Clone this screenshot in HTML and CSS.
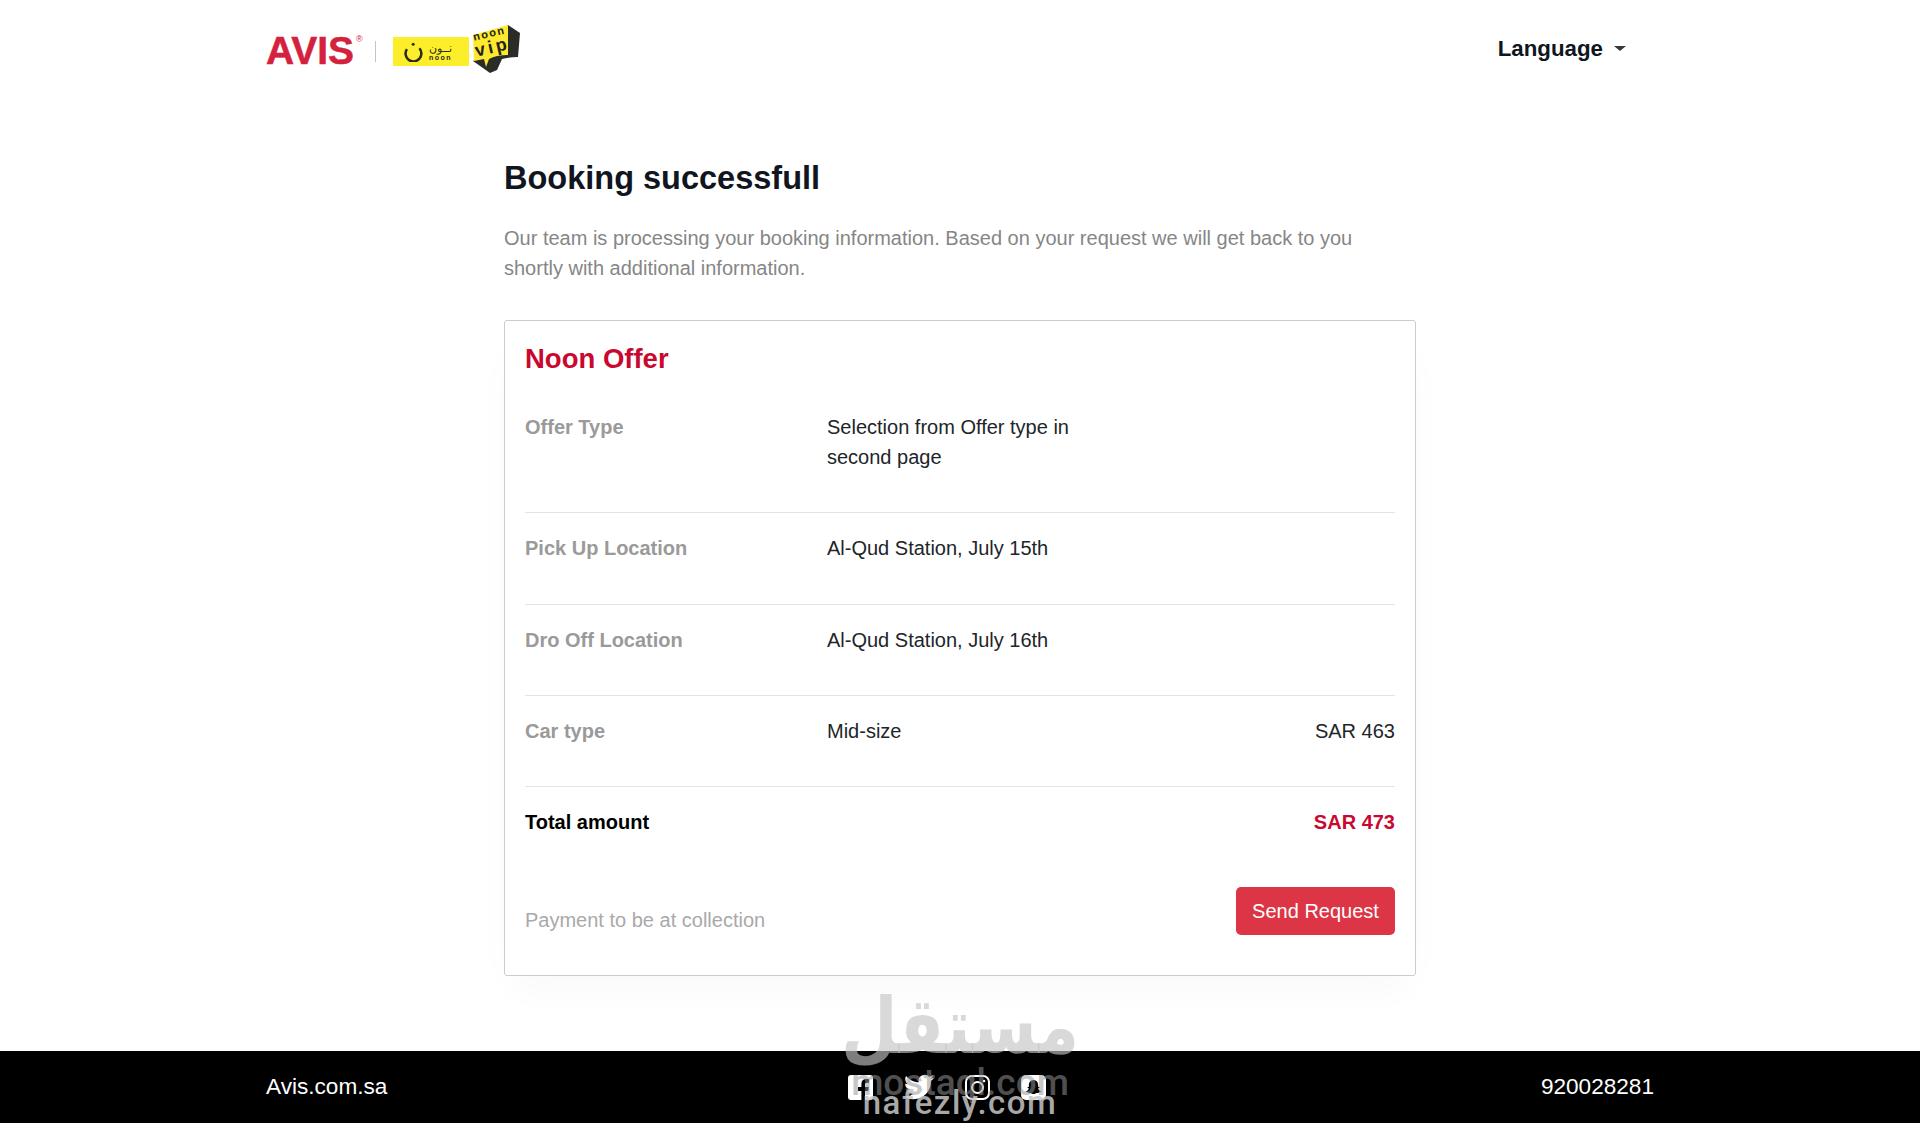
FILE: index.html
```html
<!DOCTYPE html>
<html lang="en">
<head>
  <meta charset="UTF-8" />
  <title>Booking successfull</title>
  <link rel="stylesheet" href="styles.css">
</head>
<body>
  <!-- Header with logos and language switch -->
  <header class="top-bar">
    <div class="brand">
      <span class="avis-logo">AVIS<sup>®</sup></span>
      <span class="brand-sep"></span>
      <span class="noon-logo">
        <svg class="noon-mark" viewBox="0 0 24 24" width="20" height="20" aria-hidden="true">
          <path d="M18.500 7.500A9.500 9.500 0 1 1 3.500 8.500" fill="none" stroke="#2a2a18" stroke-width="3"/>
          <circle cx="11" cy="2.600" r="1.800" fill="#2a2a18"/>
        </svg>
        <span class="noon-words"><span dir="rtl">نــون</span><span class="noon-latin">noon</span></span>
      </span>
      <span class="vip-badge">
        <svg viewBox="0 0 48 52" width="48" height="52" aria-hidden="true">
          <path d="M36 1 L48 9 L46 33 Q36 33 30 35 L25 46 L18 49 L1 37 L10 30 Z" fill="#2b2b28"/>
          <path d="M1 11 L36 1 L36 31 Q24 31 17 35 L14 43 L12 35 L2 37 Z" fill="#fde92f"/>
        </svg>
        <span class="vip-text"><span>noon</span><b>vip</b></span>
      </span>
    </div>
    <a class="lang-toggle" href="#">Language<span class="caret"></span></a>
  </header>

  <!-- Booking confirmation -->
  <main class="booking">
    <h1>Booking successfull</h1>
    <p class="intro">Our team is processing your booking information. Based on your request we will get back to you shortly with additional information.</p>

    <section class="offer-card">
      <h2>Noon Offer</h2>
      <div class="offer-row">
        <div class="offer-label">Offer Type</div>
        <div class="offer-value">Selection from Offer type in second page</div>
      </div>
      <div class="offer-row">
        <div class="offer-label">Pick Up Location</div>
        <div class="offer-value">Al-Qud Station, July 15th</div>
      </div>
      <div class="offer-row">
        <div class="offer-label">Dro Off Location</div>
        <div class="offer-value">Al-Qud Station, July 16th</div>
      </div>
      <div class="offer-row">
        <div class="offer-label">Car type</div>
        <div class="offer-value">Mid-size</div>
        <div class="offer-price">SAR 463</div>
      </div>
      <div class="total-row">
        <div>Total amount</div>
        <div class="total-price">SAR 473</div>
      </div>
      <div class="card-actions">
        <span class="pay-note">Payment to be at collection</span>
        <a class="btn-send" href="#">Send Request</a>
      </div>
    </section>
  </main>

  <footer class="site-footer">
    <a href="#">Avis.com.sa</a>
    <div class="socials">
      <svg viewBox="0 0 25 25" width="25" height="25" aria-hidden="true">
        <path fill="#fff" d="M3 0h19a3 3 0 0 1 3 3v19a3 3 0 0 1-3 3h-5v-9h3.200l.5-4H17V9.600c0-1.200.4-1.900 2-1.900h2V4.200c-.4-.1-1.500-.2-2.800-.2-2.900 0-4.800 1.700-4.800 4.900V12H10v4h3.400v9H3a3 3 0 0 1-3-3V3a3 3 0 0 1 3-3z"/>
      </svg>
      <svg viewBox="0 0 24 24" width="30" height="30" aria-hidden="true">
        <path fill="#fff" d="M23.950 4.570a10 10 0 0 1-2.820.770 4.960 4.960 0 0 0 2.160-2.720 9.900 9.900 0 0 1-3.120 1.180 4.920 4.920 0 0 0-8.380 4.480C7.690 8.090 4.070 6.120 1.640 3.160a4.820 4.820 0 0 0-.66 2.470c0 1.710.87 3.210 2.190 4.100a4.900 4.900 0 0 1-2.230-.62v.060a4.920 4.920 0 0 0 3.950 4.830 5 5 0 0 1-2.210.08 4.940 4.940 0 0 0 4.600 3.420A9.870 9.870 0 0 1 0 19.540a14 14 0 0 0 7.560 2.210c9.050 0 14-7.500 14-13.980 0-.21 0-.42-.02-.63a9.940 9.940 0 0 0 2.460-2.550z"/>
      </svg>
      <svg viewBox="0 0 25 25" width="25" height="25" fill="none" stroke="#fff" stroke-width="2" aria-hidden="true">
        <rect x="1" y="1" width="23" height="23" rx="6"/>
        <circle cx="12.500" cy="12.500" r="5.500"/>
        <circle cx="19" cy="6" r="1.300" fill="#fff" stroke="none"/>
      </svg>
      <svg viewBox="0 0 25 25" width="25" height="25" aria-hidden="true">
        <rect width="25" height="25" rx="5" fill="#fff"/>
        <path fill="#000" d="M12.500 5c3 0 4.600 2.200 4.600 4.700v2.100l1.500.2c.3.700-1 1.100-1.500 1.400.5 1.400 1.600 2.500 3 2.900-.2.800-1.500.8-2.300 1.100-.4.800-1.300.3-2.300.6-.9.400-1.500 1.100-3 1.100s-2.100-.7-3-1.100c-1-.3-1.900.2-2.300-.6-.8-.3-2.100-.3-2.300-1.100 1.400-.4 2.500-1.500 3-2.900-.5-.3-1.800-.7-1.500-1.400l1.500-.2V9.700C7.900 7.200 9.500 5 12.500 5z"/>
      </svg>
    </div>
    <span class="phone">920028281</span>
  </footer>

  <!-- Watermark over the footer edge -->
  <div class="watermark" aria-hidden="true">
    <span class="wm-arabic" dir="rtl">مستقل</span>
    <span class="wm-mostaql">mostaql.com</span>
    <span class="wm-nafezly">nafezly.com</span>
  </div>
</body>
</html>
```

FILE: styles.css
```css
* {
  box-sizing: border-box;
}

body {
  margin: 0;
  min-height: 1123px;
  position: relative;
  display: flex;
  flex-direction: column;
  background: #fff;
  color: #212529;
  font-family: "Liberation Sans", Arial, sans-serif;
  font-size: 20px;
  line-height: 30px;
  overflow: hidden;
}

a {
  color: inherit;
  text-decoration: none;
}

/* Header */
.top-bar {
  height: 98px;
  padding: 0 266px;
  display: flex;
  justify-content: space-between;
  align-items: center;
}

.brand {
  display: flex;
  align-items: center;
}

.avis-logo {
  position: relative;
  width: 96px;
  margin-top: 3px;
  color: #d4213d;
  font-size: 39px;
  font-weight: 700;
  line-height: 40px;
  -webkit-text-stroke: .5px #d4213d;
}
.avis-logo sup {
  position: absolute;
  top: 1px;
  left: 90px;
  font-size: 9px;
  line-height: 14px;
  font-weight: 400;
  -webkit-text-stroke: 0;
}

.brand-sep {
  width: 1px;
  height: 21px;
  margin: 5px 17px 0 13px;
  background: #c4c4c4;
}

.noon-logo {
  width: 76px;
  height: 29px;
  margin-top: 5px;
  padding-left: 11px;
  display: flex;
  align-items: center;
  gap: 5px;
  background: #fdee2b;
}
.noon-mark {
  flex: none;
}
.noon-words {
  display: flex;
  flex-direction: column;
  align-items: center;
  color: #2a2a18;
  font-size: 11px;
  line-height: 12px;
}
.noon-latin {
  font-size: 7px;
  font-weight: 700;
  line-height: 8px;
  letter-spacing: 1.500px;
}

.vip-badge {
  position: relative;
  margin: 2px 0 0 3px;
  width: 48px;
  height: 52px;
}
.vip-text {
  position: absolute;
  top: 4px;
  left: 2px;
  width: 34px;
  display: flex;
  flex-direction: column;
  align-items: center;
  color: #23231a;
  transform: rotate(-13deg);
  font-size: 11px;
  font-weight: 700;
  line-height: 11px;
  letter-spacing: 1.500px;
}
.vip-text b {
  font-size: 18px;
  line-height: 16px;
  letter-spacing: 3px;
}

.lang-toggle {
  display: flex;
  align-items: center;
  margin-right: 28px;
  color: #101520;
  font-size: 22.300px;
  font-weight: 700;
}
.caret {
  margin-left: 11px;
  margin-bottom: 2px;
  border-top: 5px solid #343a40;
  border-left: 6px solid transparent;
  border-right: 6px solid transparent;
}

/* Main content */
.booking {
  flex: 1;
  width: 912px;
  margin: 0 auto;
  padding-top: 59px;
}

h1 {
  margin: 0;
  color: #101520;
  font-size: 32.500px;
  line-height: 42px;
  font-weight: 700;
}

.intro {
  margin: 24px 0 0;
  color: #868686;
}

.offer-card {
  margin-top: 37px;
  height: 656px;
  padding: 18px 20px 0;
  border: 1px solid #ccc;
  border-radius: 3px;
  box-shadow: 0 20px 40px -10px rgba(0, 0, 0, .03);
}

h2 {
  margin: 0 0 33px;
  color: #c9082f;
  font-size: 27.500px;
  line-height: 40px;
  font-weight: 700;
}

.offer-row {
  display: grid;
  grid-template-columns: 302px 260px 1fr;
  padding-bottom: 40.330px;
  margin-bottom: 20px;
  border-bottom: 1px solid #e4e4e4;
}

.offer-label {
  color: #9a9a9a;
  font-weight: 700;
}

.offer-price {
  text-align: right;
}

.total-row {
  display: flex;
  justify-content: space-between;
  color: #000;
  font-weight: 700;
}
.total-price {
  color: #c9082f;
}

.card-actions {
  display: flex;
  justify-content: space-between;
  align-items: flex-end;
  margin-top: 50px;
}
.pay-note {
  color: #a9a9a9;
}
.btn-send {
  width: 159px;
  height: 48px;
  border-radius: 5px;
  background: #dc3545;
  color: #fff;
  text-align: center;
  line-height: 48px;
}

/* Footer */
.site-footer {
  height: 72px;
  padding: 0 266px;
  display: flex;
  justify-content: space-between;
  align-items: center;
  background: #000;
  color: #fff;
  font-size: 22.600px;
}
.socials {
  display: flex;
  align-items: center;
  gap: 31px;
  margin-right: 34px;
}

/* Watermark */
.watermark {
  position: absolute;
  left: 800px;
  top: 980px;
  width: 320px;
  height: 143px;
  pointer-events: none;
  text-align: center;
  font-family: Roboto, sans-serif;
}
.watermark span {
  position: absolute;
  left: 0;
  width: 100%;
}
.wm-arabic {
  top: 0;
  color: rgba(195, 195, 195, .64);
  font-family: "DejaVu Sans", sans-serif;
  font-size: 86px;
  font-weight: 700;
  line-height: 100px;
  transform: scale(.757, .910);
  transform-origin: top center;
}
.wm-mostaql {
  top: 83px;
  color: rgba(150, 150, 150, .55);
  font-size: 37px;
  font-weight: 500;
  line-height: 40px;
}
.wm-nafezly {
  top: 105px;
  color: rgba(200, 200, 200, .85);
  font-size: 33px;
  font-weight: 500;
  line-height: 36px;
  letter-spacing: 1.500px;
}
```
